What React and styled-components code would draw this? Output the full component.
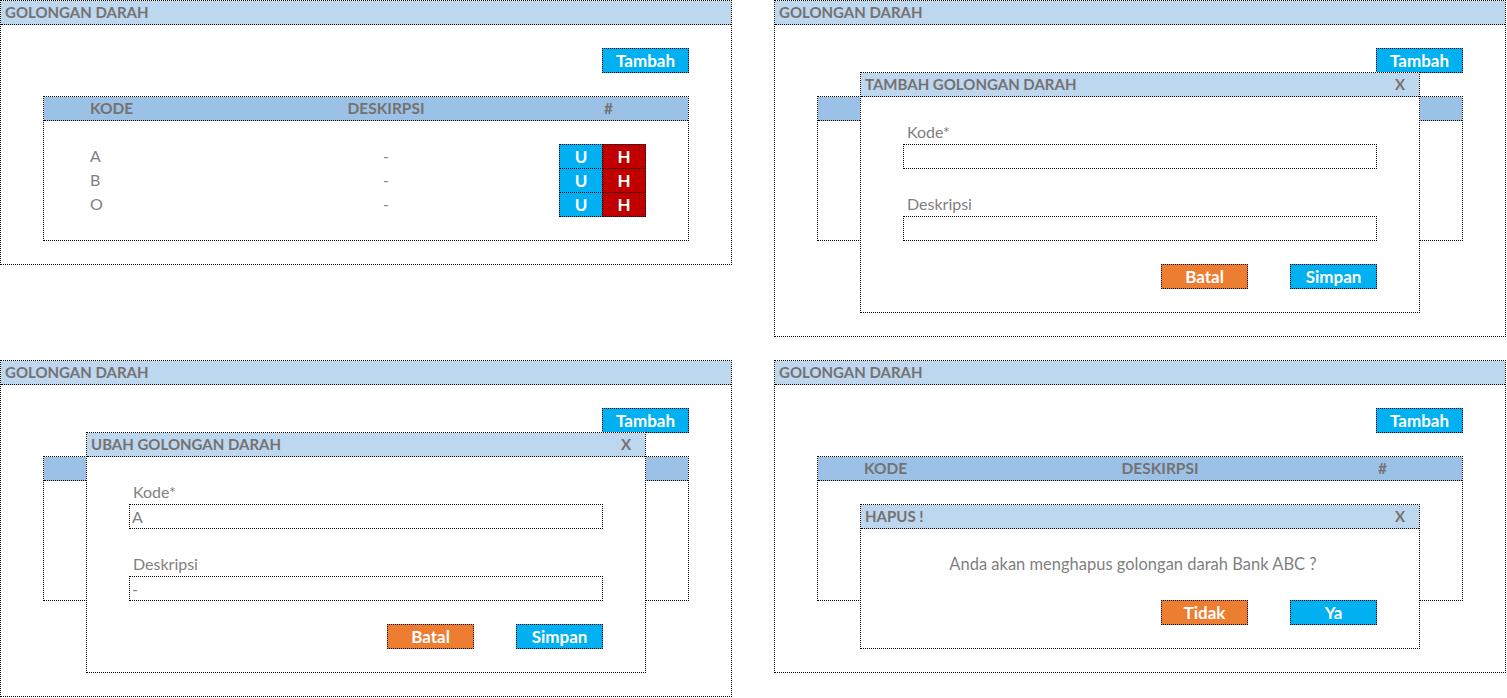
import React from 'react'
import styled, { createGlobalStyle } from 'styled-components'

const GlobalStyle = createGlobalStyle`
  * { box-sizing: border-box; }
  body {
    margin: 0;
    background: #fff;
    font-family: Lato, "Liberation Sans", sans-serif;
  }
`

const colors = {
  title: '#bdd7ee',
  head: '#9bc2e6',
  text: '#767171',
  soft: '#7f7f7f',
  blue: '#00b0f0',
  red: '#c00000',
  orange: '#ed7d31',
}

const rows = [
  { kode: 'A', deskripsi: '-' },
  { kode: 'B', deskripsi: '-' },
  { kode: 'O', deskripsi: '-' },
]

const Page = styled.div`
  display: grid;
  grid-template-columns: 732px 732px;
  column-gap: 42px;
  row-gap: 23px;
  align-items: start;
`

const Panel = styled.section`
  position: relative;
  border: 1px dotted #000;
  height: ${({ $h }) => ($h ? `${$h}px` : 'auto')};
`

const TitleBar = styled.div`
  display: flex;
  align-items: center;
  justify-content: space-between;
  height: 24px;
  padding: 0 14px 0 4px;
  background: ${colors.title};
  border-bottom: 1px dotted #000;
  color: ${colors.text};
  font-size: 15px;
  font-weight: 700;
  line-height: 23px;
`

const PanelBody = styled.div`
  padding: 23px 42px;
`

const Toolbar = styled.div`
  display: flex;
  justify-content: flex-end;
  margin-bottom: 23px;
`

const Button = styled.div`
  display: flex;
  align-items: center;
  justify-content: center;
  width: 87px;
  height: 25px;
  border: 1px dotted #000;
  background: ${({ $tone }) => colors[$tone]};
  color: #fff;
  font-size: 17px;
  font-weight: 700;
`

const Table = styled.div`
  border: 1px dotted #000;
`

const TableRow = styled.div`
  display: grid;
  grid-template-columns: 199px 286px 1fr;
  align-items: start;
  height: 24px;
  line-height: 24px;
`

const TableHead = styled(TableRow)`
  background: ${colors.head};
  border-bottom: 1px dotted #000;
  line-height: 23px;
  color: ${colors.text};
  font-size: 15.5px;
  font-weight: 700;
`

const TableBody = styled.div`
  height: 119px;
  padding: 23px 0 24px;
  color: ${colors.soft};
  font-size: 16px;
`

const Cell = styled.div`
  padding-left: ${({ $pad }) => $pad || 0}px;
  text-align: ${({ $center }) => ($center ? 'center' : 'left')};
`

const Actions = styled.div`
  display: flex;
  padding-left: 30px;
`

const ActBtn = styled.div`
  display: flex;
  align-items: center;
  justify-content: center;
  width: 44px;
  height: 25px;
  margin-left: ${({ $first }) => ($first ? 0 : -1)}px;
  border: 1px dotted #000;
  background: ${({ $tone }) => colors[$tone]};
  color: #fff;
  font-size: 17px;
  font-weight: 700;
`

const Modal = styled.div`
  position: absolute;
  left: 85px;
  top: ${({ $top }) => $top}px;
  width: 560px;
  background: #fff;
  border: 1px dotted #000;
`

const ModalBody = styled.div`
  padding: 23px 42px;
`

const Label = styled.div`
  height: 24px;
  padding-left: 4px;
  margin-top: ${({ $mt }) => $mt || 0}px;
  line-height: 24px;
  color: ${colors.soft};
  font-size: 16px;
`

const InputBox = styled.div`
  height: 25px;
  padding-left: 2px;
  border: 1px dotted #000;
  line-height: 23px;
  color: ${colors.soft};
  font-size: 16px;
`

const Footer = styled.div`
  display: flex;
  justify-content: flex-end;
  gap: 42px;
  margin-top: ${({ $mt }) => $mt}px;
`

const Message = styled.div`
  height: 24px;
  padding-right: 14px;
  line-height: 24px;
  text-align: center;
  color: ${colors.soft};
  font-size: 16.5px;
`

// rows sit behind the modal in the dialog states, so only the list view draws them
const DataTable = ({ showRows }) => (
  <Table>
    <TableHead>
      <Cell $pad={46}>KODE</Cell>
      <Cell $center>DESKIRPSI</Cell>
      <Cell $center>#</Cell>
    </TableHead>
    <TableBody>
      {showRows &&
        rows.map((r) => (
          <TableRow key={r.kode}>
            <Cell $pad={46}>{r.kode}</Cell>
            <Cell $center>{r.deskripsi}</Cell>
            <Actions>
              <ActBtn $first $tone="blue">U</ActBtn>
              <ActBtn $tone="red">H</ActBtn>
            </Actions>
          </TableRow>
        ))}
    </TableBody>
  </Table>
)

const ListPanel = ({ height, children }) => (
  <Panel $h={height}>
    <TitleBar>GOLONGAN DARAH</TitleBar>
    <PanelBody>
      <Toolbar>
        <Button $tone="blue">Tambah</Button>
      </Toolbar>
      <DataTable showRows={!children} />
    </PanelBody>
    {children}
  </Panel>
)

const FormModal = ({ title, kode, deskripsi }) => (
  <Modal $top={71}>
    <TitleBar>
      <span>{title}</span>
      <span>X</span>
    </TitleBar>
    <ModalBody>
      <Label>Kode*</Label>
      <InputBox>{kode}</InputBox>
      <Label $mt={23}>Deskripsi</Label>
      <InputBox>{deskripsi}</InputBox>
      <Footer $mt={23}>
        <Button $tone="orange">Batal</Button>
        <Button $tone="blue">Simpan</Button>
      </Footer>
    </ModalBody>
  </Modal>
)

export default function App() {
  return (
    <>
      <GlobalStyle />
      <Page>
        <ListPanel />
        <ListPanel height={337}>
          <FormModal title="TAMBAH GOLONGAN DARAH" />
        </ListPanel>
        <ListPanel height={337}>
          <FormModal title="UBAH GOLONGAN DARAH" kode="A" deskripsi="-" />
        </ListPanel>
        <ListPanel height={313}>
          <Modal $top={143}>
            <TitleBar>
              <span>HAPUS !</span>
              <span>X</span>
            </TitleBar>
            <ModalBody>
              <Message>Anda akan menghapus golongan darah Bank ABC ?</Message>
              <Footer $mt={24}>
                <Button $tone="orange">Tidak</Button>
                <Button $tone="blue">Ya</Button>
              </Footer>
            </ModalBody>
          </Modal>
        </ListPanel>
      </Page>
    </>
  )
}
